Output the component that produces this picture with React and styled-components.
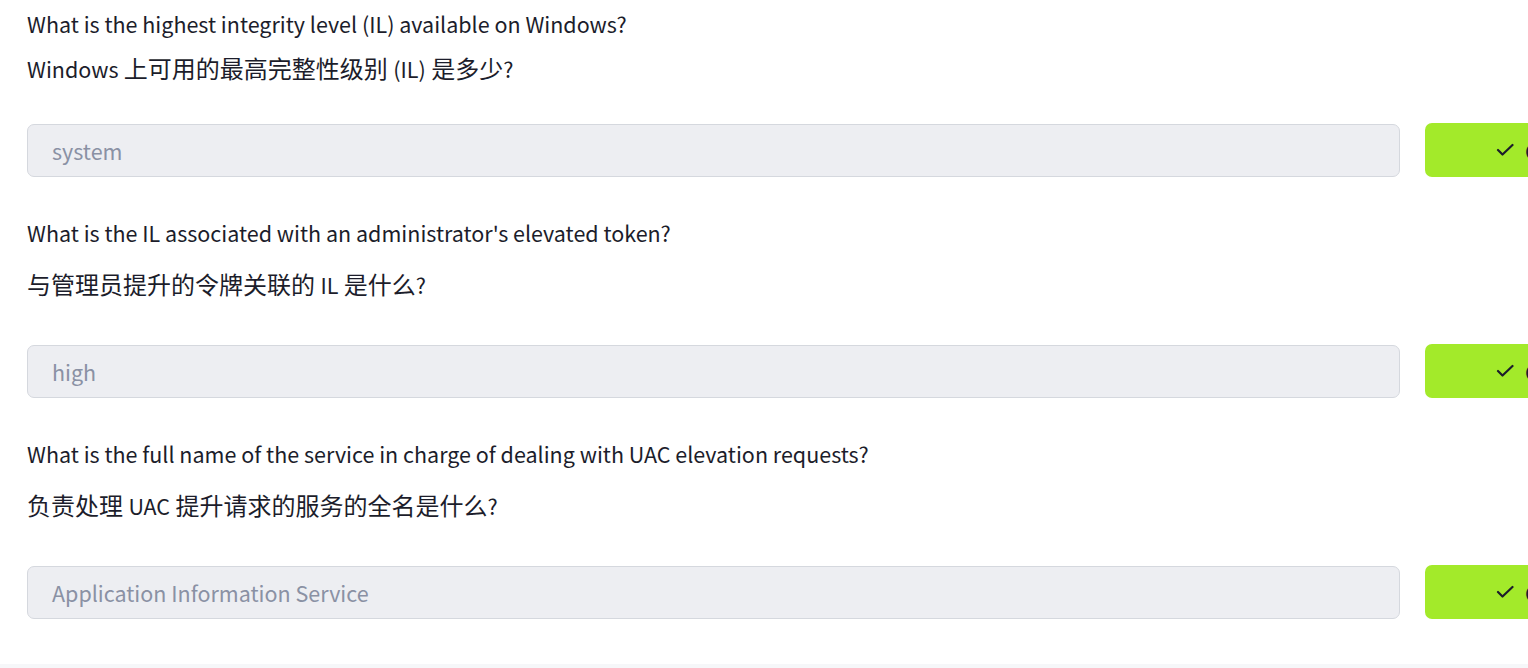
import React from 'react'
import styled, { createGlobalStyle } from 'styled-components'

const GlobalStyle = createGlobalStyle`
  html, body {
    margin: 0;
    padding: 0;
    background: #ffffff;
    overflow: hidden;
  }
  body {
    font-family: "Noto Sans CJK SC", "Noto Sans", sans-serif;
    color: #1c1d2b;
  }
`

const Page = styled.div`
  width: 1528px;
  height: 668px;
  overflow: hidden;
  display: flex;
  flex-direction: column;
`

const Content = styled.div`
  flex: 1;
  padding: 7px 0 0 27px;
  display: flex;
  flex-direction: column;
  gap: 39px;
`

const Footer = styled.div`
  height: 4px;
  background: #f6f7f9;
`

const Question = styled.div`
  display: flex;
  flex-direction: column;
`

const English = styled.p`
  margin: 0;
  font-size: 21.5px;
  line-height: 34px;
  white-space: nowrap;
`

const Chinese = styled.p`
  margin: ${p => (p.$tight ? '10px 0 37px' : '17px 0 42px')};
  font-size: 24px;
  line-height: 34px;
  white-space: nowrap;
`

const Latin = styled.span`
  font-size: 21.5px;
`

const Row = styled.div`
  display: flex;
  align-items: center;
  gap: 25px;
`

const AnswerBox = styled.div`
  box-sizing: border-box;
  width: 1373px;
  height: 53px;
  flex-shrink: 0;
  display: flex;
  align-items: center;
  padding-left: 24px;
  background: #edeef2;
  border: 1px solid #d5d8de;
  border-radius: 7px;
  color: #8a91a4;
  font-size: 21.5px;
`

const SubmitButton = styled.button`
  box-sizing: border-box;
  width: 300px;
  height: 54px;
  flex-shrink: 0;
  display: flex;
  align-items: center;
  gap: 11px;
  padding: 0 0 0 71px;
  background: #a3ea2a;
  border: none;
  border-radius: 7px;
  color: #1c1d2b;
  font-family: inherit;
  font-size: 21.5px;
  font-weight: 500;
`

const Check = () => (
  <svg width="18" height="14" viewBox="0 0 18 14" fill="none">
    <path d="M2 7 L6.5 11.5 L16.5 2" stroke="#1c1d2b" strokeWidth="2.2" strokeLinecap="round" strokeLinejoin="round" />
  </svg>
)

// Latin runs inside the translation are set a little smaller than the ideographs
const renderMixed = text =>
  text.split(/([A-Za-z()][A-Za-z() ]*[A-Za-z()]|\?)/).map((part, i) =>
    i % 2 === 1 ? <Latin key={i}>{part}</Latin> : part
  )

const questions = [
  {
    en: 'What is the highest integrity level (IL) available on Windows?',
    zh: 'Windows 上可用的最高完整性级别 (IL) 是多少?',
    answer: 'system',
    tight: true,
  },
  {
    en: "What is the IL associated with an administrator's elevated token?",
    zh: '与管理员提升的令牌关联的 IL 是什么?',
    answer: 'high',
  },
  {
    en: 'What is the full name of the service in charge of dealing with UAC elevation requests?',
    zh: '负责处理 UAC 提升请求的服务的全名是什么?',
    answer: 'Application Information Service',
  },
]

const App = () => {
  return (
    <Page>
      <GlobalStyle />
      <Content>
        {questions.map(q => (
          <Question key={q.en}>
            <English>{q.en}</English>
            <Chinese $tight={q.tight}>{renderMixed(q.zh)}</Chinese>
            <Row>
              <AnswerBox>{q.answer}</AnswerBox>
              <SubmitButton>
                <Check />
                Correct Answer
              </SubmitButton>
            </Row>
          </Question>
        ))}
      </Content>
      <Footer />
    </Page>
  )
}

export default App
